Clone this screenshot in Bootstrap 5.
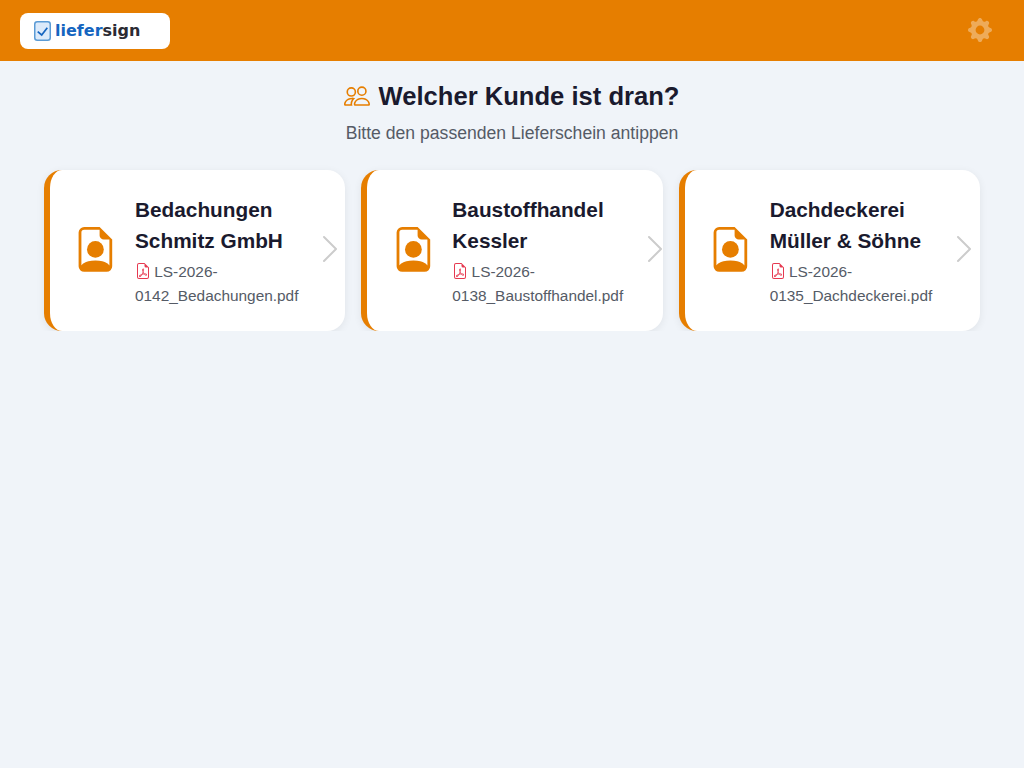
<!DOCTYPE html>
<html lang="de">
<head>
    <meta charset="UTF-8">
    <meta name="viewport" content="width=device-width, initial-scale=1.0">
    <title>liefersign</title>
    <link href="https://cdn.jsdelivr.net/npm/bootstrap@5.3.3/dist/css/bootstrap.min.css" rel="stylesheet">
    <style>
        body { background-color: #f0f4f9; font-family: "Liberation Sans", Arial, sans-serif; color: #1a1a2e; }
        .kopf { background-color: #e67e00; height: 61px; padding: 0 32px 0 20px; }
        .logo-box { background: #fff; width: 150px; height: 36px; border-radius: 8px; padding-left: 14px; gap: 4px; }
        .logo-text { font-family: "DejaVu Sans", sans-serif; font-weight: 700; font-size: 16px; color: #2b2b33; }
        .logo-text span { color: #1565c0; }
        .zahnrad { color: #fff; opacity: .35; margin-bottom: 1px; }
        .seite { padding: 17px 44px 0; }
        .titel { font-size: 25.6px; font-weight: 700; line-height: 36px; margin: 0; gap: 8.5px; padding-right: .5px; }
        .titel svg { color: #e67e00; }
        .untertitel { font-size: 17.6px; line-height: 26px; color: #555b66; margin: 6px 0 24px; }
        .kunden { display: grid; grid-template-columns: repeat(3, minmax(0, 1fr)); gap: 16px; }
        .kunde { background: #fff; border-left: 6px solid #e67e00; border-radius: 18px; padding: 22px 22px 22px 23.4px; height: 161px; gap: 16.8px; box-shadow: 0 2px 8px rgba(0, 0, 0, .07); }
        .kunde-icon { color: #e67e00; flex-shrink: 0; margin-top: -2px; }
        .kunde-name { font-size: 20.8px; font-weight: 700; line-height: 31px; }
        .kunde-datei { font-size: 15.4px; line-height: 24px; color: #555b66; margin-top: 4px; }
        .kunde-datei svg { color: #e63950; vertical-align: -2px; margin-right: -1px; }
        .pfeil { color: #ccc; flex-shrink: 0; margin: -3px 0 0 -1px; }
    </style>
</head>
<body>
    <header class="kopf d-flex align-items-center justify-content-between">
        <div class="logo-box d-flex align-items-center">
            <svg width="17" height="20" viewBox="0 0 17 20"><rect x=".75" y=".75" width="15.5" height="18.5" rx="2.5" fill="#dceafa" stroke="#5b9bd5" stroke-width="1.5"/><path d="M3.7 10.7l4 3.3 5.6-7.3" fill="none" stroke="#1565c0" stroke-width="1.7"/></svg>
            <div class="logo-text"><span>liefer</span>sign</div>
        </div>
        <svg class="zahnrad" width="24" height="24" viewBox="0 0 16 16" fill="currentColor"><path d="M9.405 1.05c-.413-1.4-2.397-1.4-2.81 0l-.1.34a1.464 1.464 0 0 1-2.105.872l-.31-.17c-1.283-.698-2.686.705-1.987 1.987l.169.311c.446.82.023 1.841-.872 2.105l-.34.1c-1.4.413-1.4 2.397 0 2.81l.34.1a1.464 1.464 0 0 1 .872 2.105l-.17.31c-.698 1.283.705 2.686 1.987 1.987l.311-.169a1.464 1.464 0 0 1 2.105.872l.1.34c.413 1.4 2.397 1.4 2.81 0l.1-.34a1.464 1.464 0 0 1 2.105-.872l.31.17c1.283.698 2.686-.705 1.987-1.987l-.169-.311a1.464 1.464 0 0 1 .872-2.105l.34-.1c1.4-.413 1.4-2.397 0-2.81l-.34-.1a1.464 1.464 0 0 1-.872-2.105l.17-.31c.698-1.283-.705-2.686-1.987-1.987l-.311.169a1.464 1.464 0 0 1-2.105-.872l-.1-.34zM8 10.93a2.929 2.929 0 1 1 0-5.858 2.929 2.929 0 0 1 0 5.858z"/></svg>
    </header>

    <main class="seite">
        <h1 class="titel d-flex align-items-center justify-content-center">
            <svg width="26" height="26" viewBox="0 0 16 16" fill="currentColor"><path d="M15 14s1 0 1-1-1-4-5-4-5 3-5 4 1 1 1 1h8Zm-7.978-1A.261.261 0 0 1 7 12.996c.001-.264.167-1.03.76-1.72C8.312 10.629 9.282 10 11 10c1.717 0 2.687.63 3.24 1.276.593.69.758 1.457.76 1.72l-.008.002a.274.274 0 0 1-.014.002H7.022ZM11 7a2 2 0 1 0 0-4 2 2 0 0 0 0 4Zm3-2a3 3 0 1 1-6 0 3 3 0 0 1 6 0ZM6.936 9.28a5.88 5.88 0 0 0-1.23-.247A7.35 7.35 0 0 0 5 9c-4 0-5 3-5 4 0 .667.333 1 1 1h4.216A2.238 2.238 0 0 1 5 13c0-1.01.377-2.042 1.09-2.904.243-.294.526-.569.846-.816ZM4.92 10A5.493 5.493 0 0 0 4 13H1c0-.26.164-1.03.76-1.724.545-.636 1.492-1.256 3.16-1.275ZM1.5 5.5a3 3 0 1 1 6 0 3 3 0 0 1-6 0Zm3-2a2 2 0 1 0 0 4 2 2 0 0 0 0-4Z"/></svg>
            Welcher Kunde ist dran?
        </h1>
        <p class="untertitel text-center">Bitte den passenden Lieferschein antippen</p>

        <div class="kunden" id="kunden"></div>
    </main>

    <script>
        const kunden = [
            { name: 'Bedachungen Schmitz GmbH', datei: 'LS-2026-0142_Bedachungen.pdf' },
            { name: 'Baustoffhandel Kessler', datei: 'LS-2026-0138_Baustoffhandel.pdf' },
            { name: 'Dachdeckerei Müller & Söhne', datei: 'LS-2026-0135_Dachdeckerei.pdf' }
        ];
        const iconPerson = '<svg class="kunde-icon" width="44.8" height="44.8" viewBox="0 0 16 16" fill="currentColor"><path d="M11 8a3 3 0 1 1-6 0 3 3 0 0 1 6 0z"/><path d="M14 14V4.5L9.5 0H4a2 2 0 0 0-2 2v12a2 2 0 0 0 2 2h8a2 2 0 0 0 2-2zM9.5 3A1.5 1.5 0 0 0 11 4.5h2v9.255S12 12 8 12s-5 1.755-5 1.755V2a1 1 0 0 1 1-1h5.5v2z"/></svg>';
        const iconPdf = '<svg width="16" height="16" viewBox="0 0 16 16" fill="currentColor"><path d="M14 14V4.5L9.5 0H4a2 2 0 0 0-2 2v12a2 2 0 0 0 2 2h8a2 2 0 0 0 2-2zM9.5 3A1.5 1.5 0 0 0 11 4.5h2V14a1 1 0 0 1-1 1H4a1 1 0 0 1-1-1V2a1 1 0 0 1 1-1h5.5v2z"/><path d="M4.603 14.087a.81.81 0 0 1-.438-.42c-.195-.388-.13-.776.08-1.102.198-.307.526-.568.897-.787a7.68 7.68 0 0 1 1.482-.645 19.697 19.697 0 0 0 1.062-2.227 7.269 7.269 0 0 1-.43-1.295c-.086-.4-.119-.796-.046-1.136.075-.354.274-.672.65-.823.192-.077.4-.12.602-.077a.7.7 0 0 1 .477.365c.088.164.12.356.127.538.007.188-.012.396-.047.614-.084.51-.27 1.134-.52 1.794a10.954 10.954 0 0 0 .98 1.686 5.753 5.753 0 0 1 1.334.05c.364.066.734.195.96.465.12.144.193.32.2.518.007.192-.047.382-.138.563a1.04 1.04 0 0 1-.354.416.856.856 0 0 1-.51.138c-.331-.014-.654-.196-.933-.417a5.712 5.712 0 0 1-.911-.95 11.651 11.651 0 0 0-1.997.406 11.307 11.307 0 0 1-1.02 1.51c-.292.35-.609.656-.927.787a.793.793 0 0 1-.58.029zm1.379-1.901c-.166.076-.32.156-.459.238-.328.194-.541.383-.647.547-.094.145-.096.25-.04.361.01.022.02.036.026.044a.266.266 0 0 0 .035-.012c.137-.056.355-.235.635-.572a8.18 8.18 0 0 0 .45-.606zm1.64-1.33a12.71 12.71 0 0 1 1.01-.193 11.744 11.744 0 0 1-.51-.858 20.801 20.801 0 0 1-.5 1.05zm2.446.45c.15.163.296.3.435.41.24.19.407.253.498.256a.107.107 0 0 0 .07-.015.307.307 0 0 0 .094-.125.436.436 0 0 0 .059-.2.095.095 0 0 0-.026-.063c-.052-.062-.2-.152-.518-.209a3.876 3.876 0 0 0-.612-.053zM8.078 7.8a6.7 6.7 0 0 0 .2-.828c.031-.188.043-.343.038-.465a.613.613 0 0 0-.032-.198.517.517 0 0 0-.145.04c-.087.035-.158.106-.196.283-.04.192-.03.469.046.822.024.111.054.227.09.346z"/></svg>';
        const iconPfeil = '<svg class="pfeil" width="32" height="32" viewBox="0 0 16 16" fill="currentColor"><path fill-rule="evenodd" d="M4.646 1.646a.5.5 0 0 1 .708 0l6 6a.5.5 0 0 1 0 .708l-6 6a.5.5 0 0 1-.708-.708L10.293 8 4.646 2.354a.5.5 0 0 1 0-.708z"/></svg>';

        document.getElementById('kunden').innerHTML = kunden.map(k => `
            <div class="kunde d-flex align-items-center">
                ${iconPerson}
                <div>
                    <div class="kunde-name">${k.name.replace('&', '&amp;')}</div>
                    <div class="kunde-datei">${iconPdf} ${k.datei}</div>
                </div>
                ${iconPfeil}
            </div>`).join('');
    </script>
</body>
</html>
